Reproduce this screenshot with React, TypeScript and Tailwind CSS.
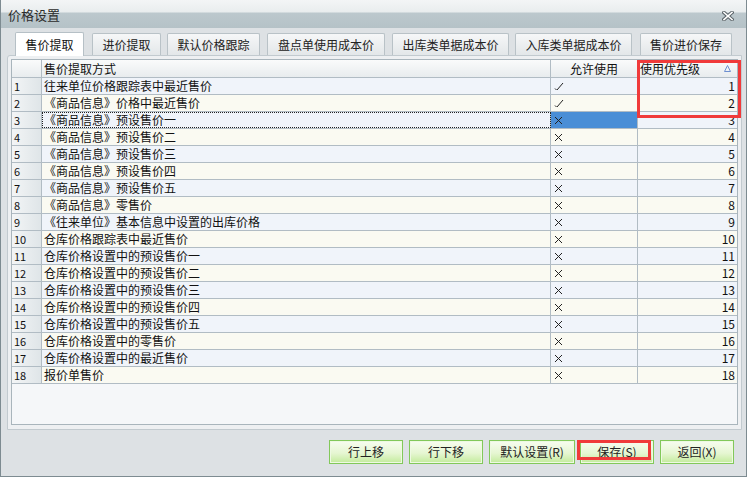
import React from "react";

const rows: { name: string; ok: boolean }[] = [
  { name: "往来单位价格跟踪表中最近售价", ok: true },
  { name: "《商品信息》价格中最近售价", ok: true },
  { name: "《商品信息》预设售价一", ok: false },
  { name: "《商品信息》预设售价二", ok: false },
  { name: "《商品信息》预设售价三", ok: false },
  { name: "《商品信息》预设售价四", ok: false },
  { name: "《商品信息》预设售价五", ok: false },
  { name: "《商品信息》零售价", ok: false },
  { name: "《往来单位》基本信息中设置的出库价格", ok: false },
  { name: "仓库价格跟踪表中最近售价", ok: false },
  { name: "仓库价格设置中的预设售价一", ok: false },
  { name: "仓库价格设置中的预设售价二", ok: false },
  { name: "仓库价格设置中的预设售价三", ok: false },
  { name: "仓库价格设置中的预设售价四", ok: false },
  { name: "仓库价格设置中的预设售价五", ok: false },
  { name: "仓库价格设置中的零售价", ok: false },
  { name: "仓库价格设置中的最近售价", ok: false },
  { name: "报价单售价", ok: false },
];

const tabs: { label: string; w: string; ml: string }[] = [
  { label: "进价提取", w: "w-[69px]", ml: "ml-[8px]" },
  { label: "默认价格跟踪", w: "w-[93px]", ml: "ml-[6px]" },
  { label: "盘点单使用成本价", w: "w-[118px]", ml: "ml-[7px]" },
  { label: "出库类单据成本价", w: "w-[117px]", ml: "ml-[7px]" },
  { label: "入库类单据成本价", w: "w-[117px]", ml: "ml-[6px]" },
  { label: "售价进价保存", w: "w-[92px]", ml: "ml-[8px]" },
];

function Check() {
  return (
    <svg width="10" height="10" viewBox="0 0 10 10">
      <path d="M1 7.5 L2.5 9" stroke="#222" strokeWidth="1" fill="none" />
      <path d="M3 9 L9 2" stroke="#222" strokeWidth="1" fill="none" />
    </svg>
  );
}

function Cross() {
  return (
    <svg width="9" height="9" viewBox="0 0 9 9">
      <path d="M1 1 L8 8 M8 1 L1 8" stroke="#222" strokeWidth="1" fill="none" />
    </svg>
  );
}

function Btn({ label }: { label: string }) {
  return (
    <div className="flex h-[24px] w-[74px] items-center justify-center border border-[#82c85a] bg-[linear-gradient(to_bottom,#f7fcf0,#e6f6d2_55%,#c3eb9c)] text-[12px] text-[#222] shadow-[inset_0_0_0_1px_#eef9e2]">
      {label}
    </div>
  );
}

export default function App() {
  return (
    <div
      className="relative h-[478px] w-[749px] bg-white"
      style={{ fontFamily: '"Noto Sans CJK SC", "Noto Sans", sans-serif' }}
    >
      <div className="flex h-[477px] w-[747px] flex-col border-b border-l border-r border-[#7d8b91] bg-[#dde1e4]">
        {/* title bar */}
        <div className="flex h-[28px] items-center justify-between bg-[linear-gradient(to_bottom,#f3f5f6_0px,#e9edee_12px,#bcc8cd_13px,#b5c2c7_28px)] pl-[7px] pr-[12px]">
          <span className="text-[13px] leading-none text-[#2b2b2b]">价格设置</span>
          <svg width="12" height="10" viewBox="0 0 12 10" className="mt-[3px]">
            <path d="M2 1.5 L10 8.5 M10 1.5 L2 8.5" stroke="#5a6368" strokeWidth="3.6" strokeLinecap="square" fill="none" />
            <path d="M2 1.5 L10 8.5 M10 1.5 L2 8.5" stroke="#ffffff" strokeWidth="1.6" strokeLinecap="square" fill="none" />
          </svg>
        </div>

        {/* tabs */}
        <div className="mt-[4px] flex h-[23px] items-end pl-[14px]">
          <div className="relative z-10 -mb-px flex h-[24px] w-[69px] items-center justify-center rounded-t-[2px] border border-b-0 border-[#b6c0c6] bg-white text-[12px] text-[#111]">
            售价提取
          </div>
          {tabs.map((t) => (
            <div
              key={t.label}
              className={`${t.w} ${t.ml} flex h-[22px] items-center justify-center rounded-t-[2px] border border-b-0 border-[#b9c2c7] bg-[linear-gradient(to_bottom,#f6f7f8,#e3e7e9)] text-[12px] text-[#222]`}
            >
              {t.label}
            </div>
          ))}
        </div>

        {/* panel */}
        <div className="ml-[6px] flex h-[375px] w-[735px] flex-col rounded-tl-[3px] border border-[#c2cacf] bg-[#eef0f2] pb-[4px] pl-[3px] pr-[3px] pt-[3px]">
          <div className="flex flex-1 flex-col border border-[#a9b5bc] bg-[#f5f7f9] text-[12px] text-[#111]">
            {/* header */}
            <div className="flex h-[18px] border-b border-[#b1bcc4] bg-[linear-gradient(to_bottom,#fafbfb,#e8ecee)] leading-[17px]">
              <div className="w-[30px] border-r border-[#b1bcc4]" />
              <div className="w-[509px] border-r border-[#b1bcc4] pl-[2px]">售价提取方式</div>
              <div className="w-[87px] border-r border-[#b1bcc4] text-center">允许使用</div>
              <div className="flex flex-1 items-center justify-between pl-[2px] pr-[6px]">
                <span>使用优先级</span>
                <svg width="7" height="7" viewBox="0 0 7 7">
                  <path d="M3.5 0.5 L6.5 6.5 L0.5 6.5 Z" stroke="#6d8fd0" strokeWidth="1" fill="none" />
                </svg>
              </div>
            </div>
            {rows.map((r, i) => {
              const sel = i === 2;
              const bg = i % 2 === 0 ? "bg-[#f0f4fa]" : "bg-[#fafaf2]";
              return (
                <div key={i} className={`flex h-[17px] border-b border-[#b1bcc4] leading-[16px] ${bg}`}>
                  <div className="w-[30px] border-r border-[#b1bcc4] bg-[linear-gradient(to_right,#f3f5f6,#dfe5e8)] pl-[2px] text-[11px]">
                    {i + 1}
                  </div>
                  <div
                    className={`w-[509px] border-r border-[#b1bcc4] pl-[2px] ${
                      sel ? "outline outline-1 -outline-offset-1 outline-dotted outline-[#222]" : ""
                    }`}
                  >
                    {r.name}
                  </div>
                  <div
                    className={`flex w-[87px] items-center border-r border-[#b1bcc4] pl-[3px] ${
                      sel ? "bg-[#4a8ed6]" : ""
                    }`}
                  >
                    {r.ok ? <Check /> : <Cross />}
                  </div>
                  <div className="flex-1 pr-[2px] text-right">{i + 1}</div>
                </div>
              );
            })}
            <div className="flex-1" />
          </div>
        </div>

        {/* buttons */}
        <div className="mt-[10px] flex justify-end pr-[12px]">
          <Btn label="行上移" />
          <div className="ml-[6px]"><Btn label="行下移" /></div>
          <div className="ml-[6px] flex h-[24px] w-[86px] items-center justify-center border border-[#82c85a] bg-[linear-gradient(to_bottom,#f7fcf0,#e6f6d2_55%,#c3eb9c)] text-[12px] text-[#222] shadow-[inset_0_0_0_1px_#eef9e2]">
            默认设置(R)
          </div>
          <div className="ml-[5px]"><Btn label="保存(S)" /></div>
          <div className="ml-[6px]"><Btn label="返回(X)" /></div>
        </div>
      </div>

      {/* red highlight overlays */}
      <div className="absolute left-[637px] top-[60px] h-[58px] w-[104px] border-[3px] border-[#f03a3a]" />
      <div className="absolute left-[577px] top-[440px] h-[20px] w-[74px] border-[3px] border-[#f03a3a]" />
    </div>
  );
}
